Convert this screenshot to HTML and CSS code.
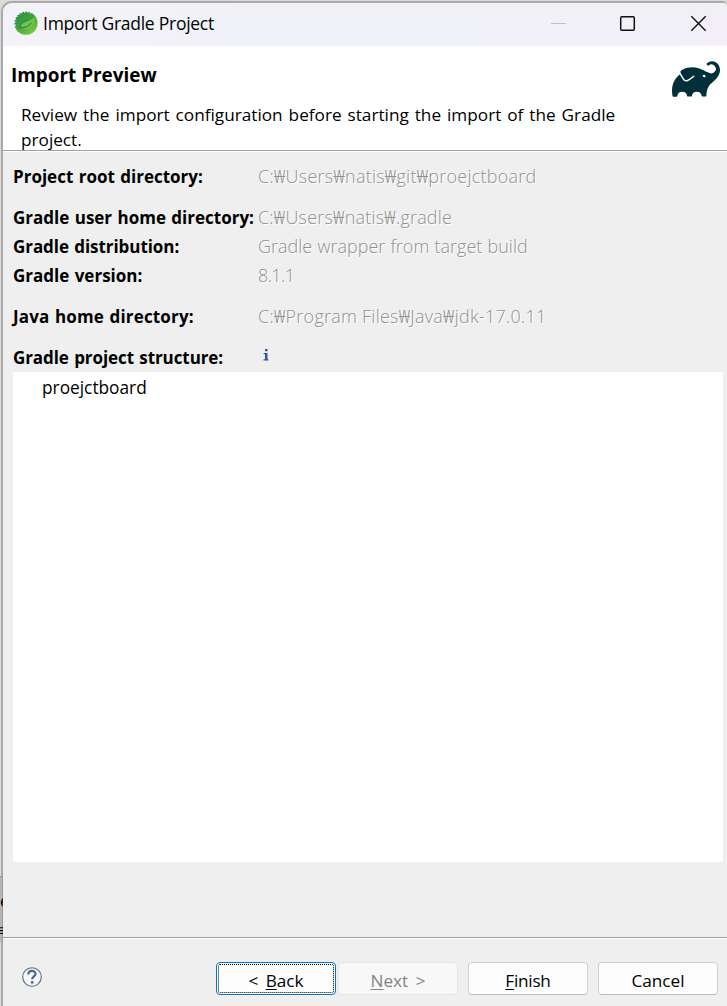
FILE: index.html
```html
<!DOCTYPE html>
<html lang="en">
<head>
<meta charset="utf-8">
<title>Import Gradle Project</title>
<link rel="stylesheet" href="styles.css">
</head>
<body>
<div class="backdrop"><span class="behind behind-e">e</span><span class="behind behind-lines">≡</span></div>
<main class="dialog">
  <header class="titlebar">
    <svg class="app-icon" viewBox="0 0 24 24">
      <defs><linearGradient id="leaf" x1="0" y1="0" x2="0.7" y2="1"><stop offset="0" stop-color="#1f8b43"/><stop offset=".55" stop-color="#46a43d"/><stop offset="1" stop-color="#7cc844"/></linearGradient></defs>
      <circle cx="12" cy="12.200" r="11.600" fill="url(#leaf)"/>
      <path d="M.7 15A11.600 11.600 0 0 1 18 2" fill="none" stroke="#f2f2f8" stroke-width="2.600" stroke-dasharray="1.300 1.900"/>
      <path d="M6 15.500C6 9 15 11.500 20 5C23 13 17 20 7.500 17.800Q13 17 16.500 13Q11 17 6 15.500Z" fill="#72c24a"/>
      <path d="M6.500 16C5 9.500 15 11 19.500 6M4.500 16.500Q12.500 18 17.500 12" fill="none" stroke="#278642" stroke-width="1.100"/>
    </svg>
    <span class="caption">Import Gradle Project</span>
    <svg class="controls" viewBox="0 0 170 24">
      <path d="M5 12.500H20" stroke="#bfc0c6" stroke-width="1"/>
      <rect x="74.700" y="5.700" width="13.600" height="13.600" rx="1.200" fill="none" stroke="#111" stroke-width="1.500"/>
      <path d="M145.300 5.300L159.700 19.700M159.700 5.300L145.300 19.700" stroke="#111" stroke-width="1.400"/>
    </svg>
  </header>
  <section class="banner">
    <div class="banner-text">
      <h1 class="heading">Import Preview</h1>
      <p class="message">Review the import configuration before starting the import of the Gradle<br>project.</p>
    </div>
    <svg class="gradle" viewBox="0 0 24 24" fill="#02303a"><path d="M22.695 4.297a3.807 3.807 0 0 0-5.29-.09.368.368 0 0 0 0 .533l.46.47a.363.363 0 0 0 .474.032 2.182 2.182 0 0 1 2.86 3.291c-3.023 3.02-7.056-5.447-16.211-1.083a1.24 1.24 0 0 0-.534 1.745l1.571 2.713a1.238 1.238 0 0 0 1.681.461l.037-.02-.029.02.688-.384a16.083 16.083 0 0 0 2.193-1.635.384.384 0 0 1 .499-.016.357.357 0 0 1 .016.534 16.435 16.435 0 0 1-2.316 1.741H8.77l-.696.39a1.958 1.958 0 0 1-.963.25 1.987 1.987 0 0 1-1.726-.989L3.9 9.696C1.06 11.72-.686 15.603.26 20.522a.363.363 0 0 0 .354.296h1.675a.363.363 0 0 0 .37-.331 2.478 2.478 0 0 1 4.915 0 .36.36 0 0 0 .357.317h1.638a.363.363 0 0 0 .357-.317 2.478 2.478 0 0 1 4.914 0 .363.363 0 0 0 .358.317h1.627a.363.363 0 0 0 .363-.357c.037-2.294.656-4.93 2.42-6.25 6.108-4.57 4.502-8.486 3.088-9.9zm-6.229 6.901l-1.165-.584a.73.73 0 1 1 1.165.587z"/></svg>
  </section>
  <section class="content">
    <dl class="details">
      <dt class="label gap">Project root directory:</dt><dd class="value value-root gap">C:₩Users₩natis₩git₩proejctboard</dd>
      <dt class="label">Gradle user home directory:</dt><dd class="value value-user">C:₩Users₩natis₩.gradle</dd>
      <dt class="label label-dist">Gradle distribution:</dt><dd class="value value-dist">Gradle wrapper from target build</dd>
      <dt class="label gap">Gradle version:</dt><dd class="value value-ver gap">8.1.1</dd>
      <dt class="label label-java gap">Java home directory:</dt><dd class="value value-java gap">C:₩Program Files₩Java₩jdk-17.0.11</dd>
      <dt class="label label-struct">Gradle project structure:</dt><dd class="value"><svg class="info" viewBox="0 0 6 12"><path d="M2 0H4.500V2.300H2ZM.7 4H4.500V10.300H5.500V11.500H.5V10.300H2V5.300H.7Z" fill="#3355a4"/></svg></dd>
    </dl>
    <div class="tree"><span class="tree-item">proejctboard</span></div>
  </section>
  <footer class="footer">
    <svg class="help" viewBox="0 0 20 20"><circle cx="10" cy="10" r="9.300" fill="#f5f5f7" stroke="#5a6c8c" stroke-width="1.100"/><path d="M6.300 7.600C6.300 2.700 13.800 2.900 13.500 7.200C13.300 9.400 10.200 9.600 10.200 12.300" fill="none" stroke="#52668a" stroke-width="2.200"/><circle cx="10.200" cy="15.400" r="1.400" fill="#52668a"/></svg>
    <div class="buttons">
      <button class="button focused"><span class="button-text">&lt; <u>B</u>ack</span></button>
      <button class="button disabled" disabled><span class="button-text"><u>N</u>ext &gt;</span></button>
      <button class="button spaced"><span class="button-text text-finish"><u>F</u>inish</span></button>
      <button class="button spaced"><span class="button-text">Cancel</span></button>
    </div>
  </footer>
</main>
</body>
</html>
```
FILE: styles.css
```css
* { box-sizing: border-box; }
body { display: flow-root; margin: 0; width: 727px; height: 1006px; overflow: hidden; position: relative; background: #dadad8; font: 18px/25px "Open Sans", "Noto Sans", sans-serif; color: #000; }
.backdrop { position: absolute; z-index: 1; left: 0; top: 876px; width: 3px; height: 66px; overflow: hidden; background: linear-gradient(90deg, #b4b4b4 2px, #989898 2px); border-top: 1px solid #999; }
.behind { position: absolute; left: 0; font-size: 16px; line-height: 20px; }
.behind-e { top: 14px; }
.behind-lines { top: 43px; left: -1px; }
.dialog { width: 726px; height: 1005px; margin: 1px 0 0 1px; border-left: 2px solid #aaa; border-top: 2px solid #aaa; border-radius: 11px 5px 0 0; overflow: hidden; background: #efefef; display: flex; flex-direction: column; }
.titlebar { height: 43px; flex: none; display: flex; padding: 8px 11px 0 11px; background: linear-gradient(90deg, #f3f2f8, #f0f2f8 50%, #f2f0f6); }
.app-icon { width: 24px; height: 24px; flex: none; }
.caption { margin-left: 5px; line-height: 24px; font-size: 17.5px; letter-spacing: -.26px; white-space: nowrap; }
.controls { width: 170px; height: 24px; flex: none; margin-left: auto; }
.banner { height: 105px; flex: none; display: flex; justify-content: space-between; background: #fff; border-bottom: 1px solid #a0a0a0; padding: 0 7px 0 8px; box-shadow: 0 1px #fff; position: relative; }
.heading { margin: 17px 0 0; font-size: 18.900px; line-height: 25px; font-weight: 700; }
.message { margin: 14px 0 0 10px; line-height: 25px; font-size: 17.200px; word-spacing: 1.500px; white-space: nowrap; }
.gradle { width: 48px; height: 48px; flex: none; margin-top: 9px; }
.content { height: 787px; flex: none; padding: 13px 4px 0 10px; border-bottom: 1px solid #a0a0a0; box-shadow: 0 1px #fff; }
.details { margin: 0; display: grid; grid-template-columns: 245px 1fr; row-gap: 4px; white-space: nowrap; }
.label { font-weight: 700; font-size: 17px; word-spacing: 1px; }
.label-dist { letter-spacing: -.06px; }
.label-java { letter-spacing: .15px; }
.label-struct { letter-spacing: -.08px; }
.value { margin: 0; font-weight: 300; color: #909090; text-shadow: 1px 1px #fff; }
.value-root { letter-spacing: .24px; }
.value-user { letter-spacing: .2px; }
.value-dist { word-spacing: .5px; }
.value-ver { letter-spacing: -.6px; }
.value-java { letter-spacing: .24px; }
.gap { margin-bottom: 12px; }
.info { display: block; width: 6px; height: 12px; margin: 4px 0 0 5px; }
.tree { height: 490px; margin-top: 2px; background: #fff; padding: 3px 0 0 29px; }
.tree-item { line-height: 25px; font-size: 17.300px; }
.footer { flex: 1; padding: 24px 9px 0 19px; display: flex; justify-content: space-between; }
.help { width: 20px; height: 20px; margin-top: 5px; }
.buttons { display: flex; }
.button { width: 120px; height: 33px; padding: 5px 0 0; border: 1px solid #d0d0d0; border-bottom-color: #bcbcbc; border-radius: 4px; background: #fdfdfd; color: #000; font: inherit; font-size: 17.200px; line-height: 26px; }
.button.focused { border: 1px solid #0078d4; outline: 1px dotted #000; outline-offset: -3px; word-spacing: 3px; }
.button.disabled { margin-left: 2px; background: #f8f8f8; border-color: #e6e6e6; color: #838383; word-spacing: 3px; }
.button.spaced { margin-left: 10px; }
.button-text { display: inline-block; white-space: nowrap; }
.text-finish { letter-spacing: -.25px; }
u { text-decoration-thickness: 1px; text-underline-offset: 2px; text-decoration-skip-ink: none; }
```
